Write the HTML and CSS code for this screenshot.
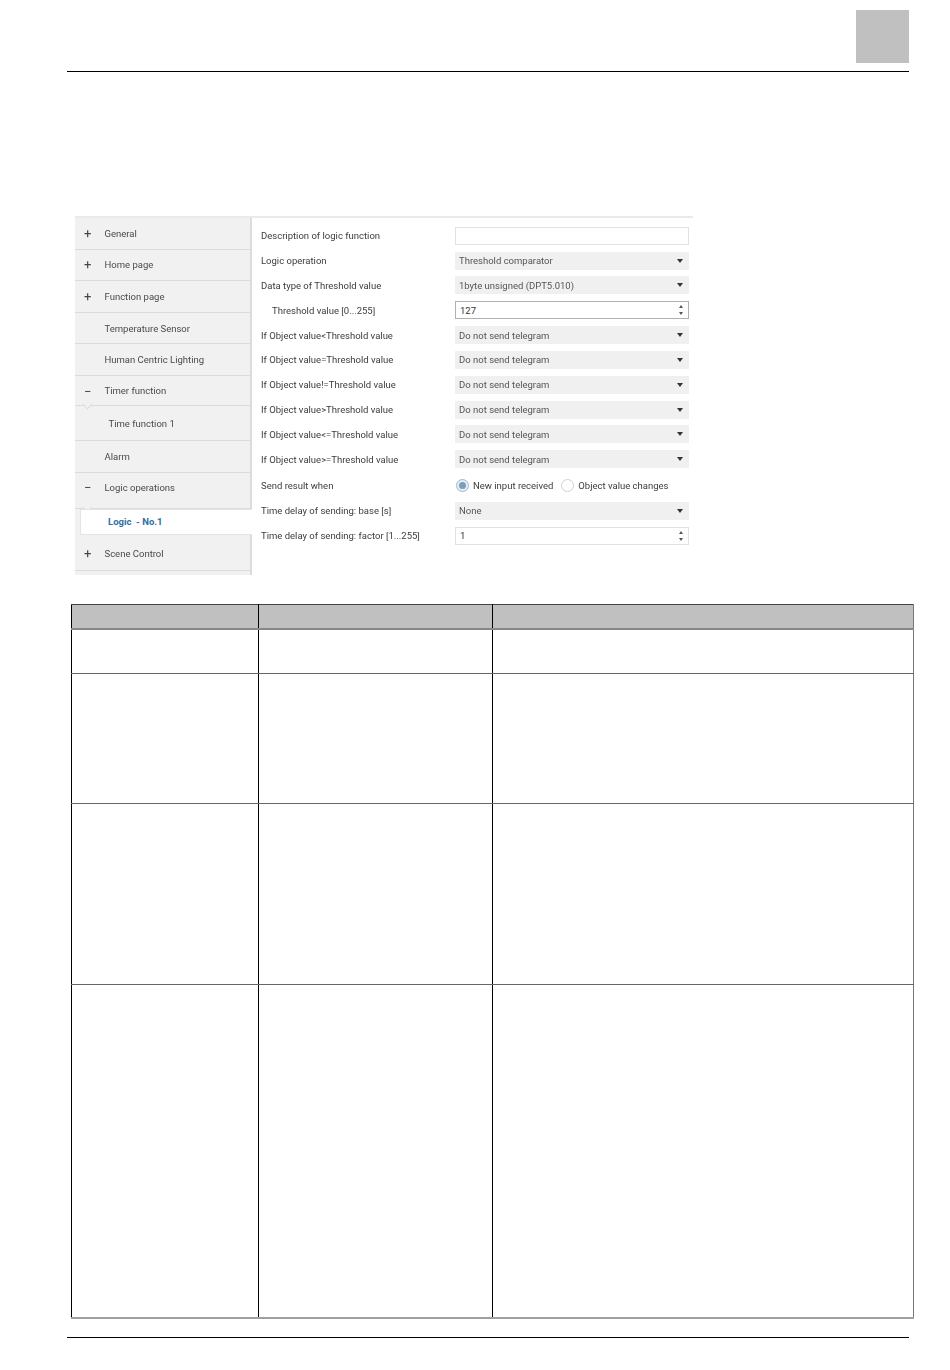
FILE: index.html
```html
<!DOCTYPE html>
<html lang="en">
<head>
<meta charset="utf-8">
<title>Logic operations</title>
<link rel="stylesheet" href="styles.css">
</head>
<body>
<div class="page">
  <header class="head"><div class="tab"></div></header>
  <section class="shot">
    <nav class="side">
      <div class="item"><span class="sign">+</span>General</div>
      <div class="item"><span class="sign">+</span>Home page</div>
      <div class="item"><span class="sign">+</span>Function page</div>
      <div class="item"><span class="sign"></span>Temperature Sensor</div>
      <div class="item"><span class="sign"></span>Human Centric Lighting</div>
      <div class="item open timer"><span class="sign">−</span>Timer function</div>
      <div class="item sub"><span class="sign"></span>Time function 1</div>
      <div class="item"><span class="sign"></span>Alarm</div>
      <div class="item open logic"><span class="sign">−</span>Logic operations</div>
      <div class="item current"><span class="sign"></span>Logic&nbsp; - No.1</div>
      <div class="item scene"><span class="sign">+</span>Scene Control</div>
      <div class="item rest"></div>
    </nav>
    <form class="form">
      <div class="row"><span class="lbl">Description of logic function</span><span class="input"></span></div>
      <div class="row"><span class="lbl">Logic operation</span><span class="select">Threshold comparator</span></div>
      <div class="row"><span class="lbl">Data type of Threshold value</span><span class="select">1byte unsigned (DPT5.010)</span></div>
      <div class="row"><span class="lbl indent">Threshold value [0...255]</span><span class="input spin strong">127</span></div>
      <div class="row"><span class="lbl">If Object value&lt;Threshold value</span><span class="select">Do not send telegram</span></div>
      <div class="row"><span class="lbl">If Object value=Threshold value</span><span class="select">Do not send telegram</span></div>
      <div class="row"><span class="lbl">If Object value!=Threshold value</span><span class="select">Do not send telegram</span></div>
      <div class="row"><span class="lbl">If Object value&gt;Threshold value</span><span class="select">Do not send telegram</span></div>
      <div class="row"><span class="lbl">If Object value&lt;=Threshold value</span><span class="select">Do not send telegram</span></div>
      <div class="row"><span class="lbl">If Object value&gt;=Threshold value</span><span class="select">Do not send telegram</span></div>
      <div class="row tail first"><span class="lbl">Send result when</span>
        <span class="radios"><span class="radio on"></span><span class="rtext">New input received</span><span class="radio"></span><span class="rtext">Object value changes</span></span></div>
      <div class="row tail"><span class="lbl">Time delay of sending: base [s]</span><span class="select">None</span></div>
      <div class="row tail"><span class="lbl">Time delay of sending: factor [1...255]</span><span class="input spin">1</span></div>
    </form>
  </section>
  <table class="params">
    <tr class="r0"><th class="c1"></th><th class="c2"></th><th class="c3"></th></tr>
    <tr class="r1"><td></td><td></td><td></td></tr>
    <tr class="r2"><td></td><td></td><td></td></tr>
    <tr class="r3"><td></td><td></td><td></td></tr>
    <tr class="r4"><td></td><td></td><td></td></tr>
  </table>
  <footer class="foot"></footer>
</div>
</body>
</html>
```
FILE: styles.css
```css
* { box-sizing: border-box; }
html, body { margin: 0; padding: 0; background: #fff; }
.page { width: 950px; height: 1370px; overflow: hidden; font-family: "Roboto", "Open Sans", sans-serif; color: #444; }

.head { margin: 0 41px 0 67px; padding-top: 10px; height: 72px; border-bottom: 1px solid #000; display: flex; justify-content: flex-end; }
.tab { width: 53px; height: 53px; background: #c0c0c0; }

.shot { margin: 144px 0 0 75px; width: 618px; height: 359px; display: flex; border-top: 2px solid #eaeaea; filter: blur(0.35px); font-size: 9.5px; }

.side { width: 177px; flex: none; background: #f1f1f1; border-right: 2px solid #dcdcdc; display: flex; flex-direction: column; }
.item { height: 31.6px; flex: none; display: flex; align-items: center; border-bottom: 1px solid #dcdcdc; color: #4a4a4a; position: relative; }
.sign { width: 29.5px; padding-left: 9px; flex: none; font-size: 13px; line-height: 1; color: #444; }
.timer { height: 30px; align-items: flex-start; padding-top: 9.5px; }
.sub { height: 35px; padding-left: 4px; padding-top: 2px; }
.logic { height: 36px; padding-bottom: 5px; }
.open::after { content: ""; position: absolute; left: 9px; bottom: -3px; width: 6px; height: 6px; background: #f1f1f1; border-right: 1px solid #dcdcdc; border-bottom: 1px solid #dcdcdc; transform: rotate(45deg); }
.current { height: 26px; margin: 0 -2px 0 5px; background: #fff; border: 1px solid #e4e4e4; border-right: 0; color: #2f6ea5; font-weight: 700; z-index: 1; }
.current .sign { width: 27px; padding: 0; }
.scene { height: 36px; padding-top: 3px; }
.rest { height: 5px; border-bottom: 0; }

.form { flex: 1; padding: 5.3px 4px 0 9px; display: flex; flex-direction: column; }
.row { height: 24.85px; flex: none; display: flex; align-items: center; }
.tail { height: 25.3px; }
.first { margin-top: 1px; }
.lbl { width: 194px; flex: none; color: #3c3c3c; white-space: nowrap; }
.indent { padding-left: 11px; }
.input, .select { width: 234px; height: 18px; flex: none; display: flex; align-items: center; padding-left: 4px; white-space: nowrap; position: relative; }
.input { background: #fff; border: 1px solid #e2e2e2; color: #333; }
.strong { border-color: #b0b0b0; }
.select { background: #f0f0f0; color: #555; }
.select::after { content: ""; position: absolute; right: 6px; top: 7px; border-style: solid; border-width: 4px 3.5px 0; border-color: #333 transparent transparent; }
.spin::before, .spin::after { content: ""; position: absolute; right: 5px; border-style: solid; border-color: transparent; }
.spin::before { top: 3px; border-width: 0 2.5px 3px; border-bottom-color: #555; }
.spin::after { bottom: 3px; border-width: 3px 2.5px 0; border-top-color: #555; }
.radios { display: flex; align-items: center; padding-left: 1px; }
.radio { width: 13px; height: 13px; border-radius: 50%; border: 1px solid #d0d0d0; background: #fff; flex: none; margin-right: 4px; display: flex; align-items: center; justify-content: center; }
.on { border-color: #9fb5cc; background: #e6eef6; }
.on::after { content: ""; width: 7px; height: 7px; border-radius: 50%; background: #7d9dbf; }
.rtext { color: #3c3c3c; margin-right: 8px; white-space: nowrap; }

.params { margin: 29px 0 0 71px; width: 843px; height: 714px; border-collapse: collapse; table-layout: fixed; }
.params th, .params td { padding: 0; border-left: 1px solid #000; border-right: 1px solid #000; border-bottom: 1px solid #666; }
.params th { background: #c0c0c0; border-top: 1px solid #444; border-bottom: 2px solid #888; }
.params td:last-child, .params th:last-child { border-right-color: #777; }
.params tr:last-child td { border-bottom: 2px solid #a0a0a0; }
.c1 { width: 187px; }
.c2 { width: 234px; }
.r0 { height: 24px; }
.r1 { height: 45px; }
.r2 { height: 130px; }
.r3 { height: 181px; }
.r4 { height: 333px; }

.foot { margin: 18px 41px 0 67px; height: 1px; background: #000; }
```
